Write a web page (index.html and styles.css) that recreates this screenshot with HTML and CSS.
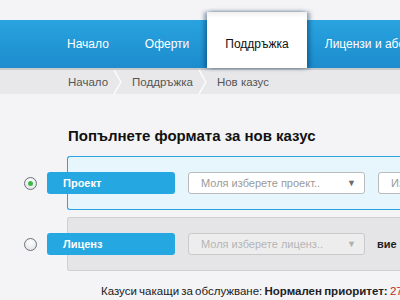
FILE: index.html
```html
<!DOCTYPE html>
<html lang="bg">
<head>
    <meta charset="UTF-8">
    <title>Нов казус</title>
    <link rel="stylesheet" href="styles.css">
</head>
<body>
    <div class="top-space"></div>

    <div class="nav">
        <div class="nav-item">Начало</div>
        <div class="nav-item">Оферти</div>
        <div class="nav-item active">Поддръжка</div>
        <div class="nav-item">Лицензи и абонаменти</div>
    </div>

    <div class="breadcrumb">
        <div class="crumb">Начало</div>
        <svg class="crumb-sep" width="10" height="24" viewBox="0 0 10 24"><path d="M1 0 L8 12 L1 24" fill="none" stroke="#fbfbfb" stroke-width="1.5"/></svg>
        <div class="crumb">Поддръжка</div>
        <svg class="crumb-sep" width="10" height="24" viewBox="0 0 10 24"><path d="M1 0 L8 12 L1 24" fill="none" stroke="#fbfbfb" stroke-width="1.5"/></svg>
        <div class="crumb">Нов казус</div>
    </div>

    <div class="content">
        <h1 class="form-title">Попълнете формата за нов казус</h1>

        <div class="form-row">
            <div class="radio checked"></div>
            <div class="option-box selected">
                <div class="option-label">Проект</div>
                <div class="select">
                    <span>Моля изберете проект..</span>
                    <span class="arrow">&#9660;</span>
                </div>
                <div class="select">
                    <span>Изберете модул..</span>
                    <span class="arrow">&#9660;</span>
                </div>
            </div>
        </div>

        <div class="form-row">
            <div class="radio"></div>
            <div class="option-box">
                <div class="option-label">Лиценз</div>
                <div class="select disabled">
                    <span>Моля изберете лиценз..</span>
                    <span class="arrow">&#9660;</span>
                </div>
                <div class="hint">вие имате активни лицензи</div>
            </div>
        </div>

        <div class="queue">
            Казуси чакащи за обслужване: <b>Нормален приоритет:</b> <span class="count">27 нови казуса</span>
        </div>
    </div>
</body>
</html>
```

FILE: styles.css
```css
* {
    margin: 0;
    padding: 0;
    box-sizing: border-box;
    font-family: 'Liberation Sans', Arial, sans-serif;
}

body {
    background-color: #f4f4f6;
    overflow: hidden;
    white-space: nowrap;
    width: 400px;
}

.top-space {
    height: 12px;
}

.nav {
    display: flex;
    height: 56px;
    padding-left: 49px;
    padding-top: 8px;
    background: linear-gradient(to bottom, transparent 0, transparent 8px, #29a4df 8px, #1c8ccd 56px);
}

.nav-item {
    padding: 0 18px;
    display: flex;
    align-items: center;
    font-size: 12px;
    color: #fff;
    flex-shrink: 0;
}

.nav-item.active {
    margin-top: -8px;
    padding: 0 18px;
    padding-top: 8px;
    background: linear-gradient(to bottom, #f0f0f0 0, #ffffff 6px, #ffffff 100%);
    color: #111;
    box-shadow: -3px 0 4px rgba(0, 40, 80, 0.4), 3px 0 4px rgba(0, 40, 80, 0.4);
    position: relative;
}

.breadcrumb {
    display: flex;
    align-items: center;
    height: 26px;
    padding-left: 68px;
    background-color: #e8e8ea;
    border-top: 2px solid #c9cacc;
}

.crumb {
    font-size: 11.5px;
    color: #555;
}

.crumb-sep {
    margin: 0 9px 0 5px;
    flex-shrink: 0;
}

.content {
    padding-top: 33px;
}

.form-title {
    font-size: 15px;
    font-weight: bold;
    color: #111;
    padding-left: 68px;
    margin-bottom: 12px;
}

.form-row {
    display: flex;
    align-items: center;
    padding-left: 24px;
    margin-bottom: 7px;
}

.radio {
    width: 13px;
    height: 13px;
    border-radius: 50%;
    border: 1px solid #6d7378;
    background: radial-gradient(circle at 50% 35%, #ffffff 0, #e2e4e6 80%);
    display: flex;
    justify-content: center;
    align-items: center;
    margin-right: 30px;
    flex-shrink: 0;
}

.radio.checked::after {
    content: '';
    width: 5px;
    height: 5px;
    border-radius: 50%;
    background-color: #3db84a;
}

.option-box {
    display: flex;
    align-items: center;
    gap: 13px;
    padding: 15px 0 15px 0;
    border: 1px solid #d0d0d2;
    border-right: none;
    border-radius: 3px 0 0 3px;
    background-color: #e5e5e7;
    flex-grow: 1;
}

.option-box.selected {
    background-color: #e7f5fd;
    border-color: #2ba3de;
}

.option-label {
    width: 128px;
    height: 22px;
    margin-left: -21px;
    padding-left: 16px;
    display: flex;
    align-items: center;
    background-color: #25a7e1;
    border-radius: 3px;
    color: #fff;
    font-size: 11px;
    font-weight: bold;
    flex-shrink: 0;
}

.select {
    width: 177px;
    height: 22px;
    display: flex;
    justify-content: space-between;
    align-items: center;
    padding: 0 8px 0 12px;
    background-color: #fff;
    border: 1px solid #b9bbbd;
    border-radius: 3px;
    font-size: 11px;
    color: #9a9a9a;
    flex-shrink: 0;
}

.select .arrow {
    font-size: 9px;
    color: #6a6a6a;
}

.select.disabled {
    background-color: #ededee;
    border-color: #c9cacc;
    color: #b5b5b5;
}

.select.disabled .arrow {
    color: #b0b0b0;
}

.hint {
    font-size: 11px;
    font-weight: bold;
    color: #222;
    margin-left: -1px;
}

.queue {
    padding-left: 101px;
    padding-top: 7px;
    font-size: 11.5px;
    word-spacing: -1px;
    color: #222;
}

.queue .count {
    color: #c62828;
}
```
